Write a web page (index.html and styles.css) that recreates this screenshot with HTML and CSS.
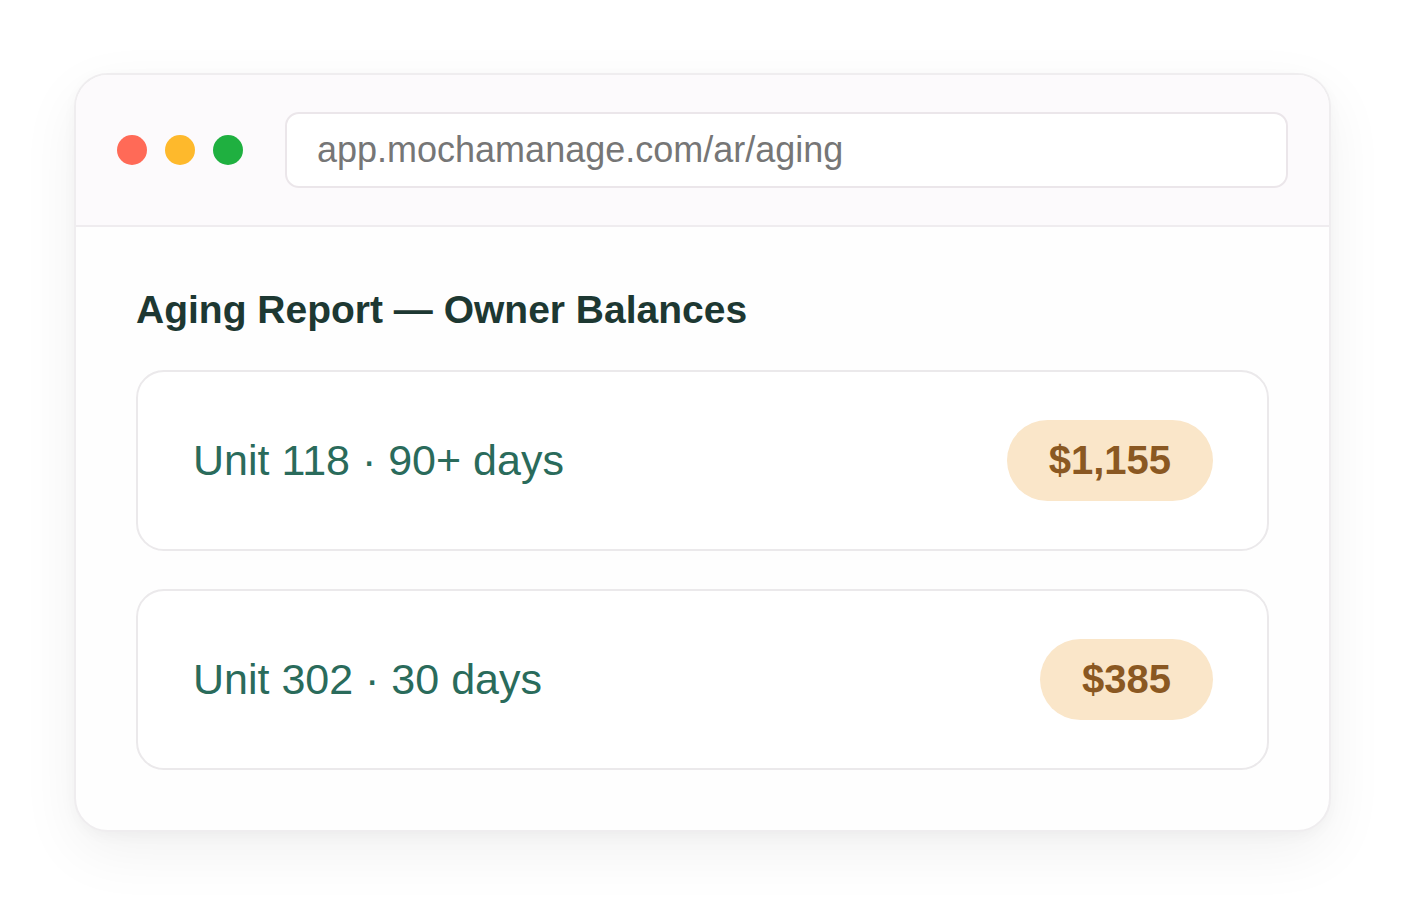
FILE: index.html
```html
<!DOCTYPE html>
<html lang="en">
<head>
  <meta charset="UTF-8" />
  <title>Aging Report</title>
  <meta name="viewport" content="width=device-width, initial-scale=1.0" />
  <link rel="stylesheet" href="styles.css">
</head>
<body>
  <div class="stage">
    <div class="window">
      <div class="chrome">
        <div class="dots">
          <span class="dot red"></span>
          <span class="dot yellow"></span>
          <span class="dot green"></span>
        </div>
        <div class="url">app.mochamanage.com/ar/aging</div>
      </div>

      <div class="content">
        <h2 class="title">Aging Report — Owner Balances</h2>
        <div class="row">
          <span class="label">Unit 118 · 90+ days</span>
          <span class="amount">$1,155</span>
        </div>
        <div class="row">
          <span class="label">Unit 302 · 30 days</span>
          <span class="amount">$385</span>
        </div>
      </div>
    </div>
  </div>
</body>
</html>
```

FILE: styles.css
```css
html, body {
  margin: 0;
  background: #fff;
  font-family: 'Liberation Sans', Arial, sans-serif;
}
.stage {
  padding: 73px 73px 72px 74px;
}
.window {
  background: #fefefe;
  border: 2px solid #efedef;
  border-radius: 34px;
  overflow: hidden;
  box-shadow: 0 20px 60px rgba(0, 0, 0, 0.06), 0 4px 14px rgba(0, 0, 0, 0.03);
}
.chrome {
  display: flex;
  align-items: center;
  gap: 42px;
  padding: 37px 41px;
  background: #fcfafc;
  border-bottom: 2px solid #efecef;
}
.dots {
  display: flex;
  gap: 18px;
}
.dot {
  width: 30px;
  height: 30px;
  border-radius: 50%;
}
.red { background: #ff6a57; }
.yellow { background: #feb92c; }
.green { background: #1fb040; }
.url {
  flex: 1;
  height: 72px;
  display: flex;
  align-items: center;
  padding: 0 30px;
  background: #fff;
  border: 2px solid #ebe6ea;
  border-radius: 14px;
  font-size: 36px;
  color: #767676;
}
.content {
  padding: 60px 60px 60px 60px;
}
.title {
  margin: 0 0 37px;
  font-size: 39px;
  line-height: 46px;
  font-weight: bold;
  color: #1d3832;
}
.row {
  box-sizing: border-box;
  display: flex;
  align-items: center;
  justify-content: space-between;
  height: 181px;
  padding: 0 54px 0 55px;
  margin-bottom: 38px;
  border: 2px solid #ebe9eb;
  border-radius: 28px;
  background: #fff;
}
.row:last-child {
  margin-bottom: 0;
}
.label {
  font-size: 43px;
  color: #2a6b5b;
}
.amount {
  display: flex;
  align-items: center;
  height: 81px;
  padding: 0 42px;
  border-radius: 41px;
  background: #fae6c9;
  font-size: 40px;
  font-weight: bold;
  color: #8a5822;
}
```
